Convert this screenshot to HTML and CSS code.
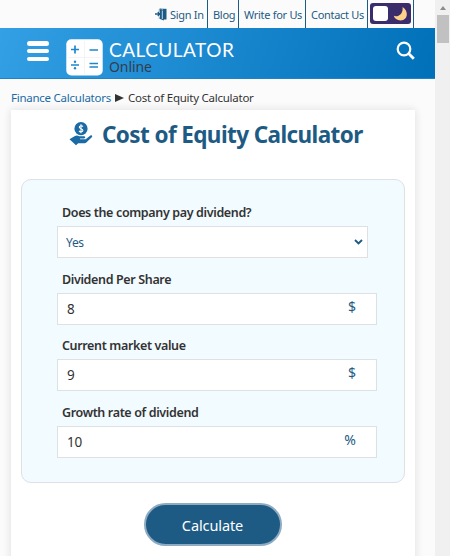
FILE: index.html
```
<!DOCTYPE html>
<html lang="en">
    <head>
        <meta charset="utf-8">
        <title>Cost of Equity Calculator</title>
        <link rel="stylesheet" href="styles.css">
    </head>
    <body>
        <div class="page">
            <nav class="top_nav">
                <a class="sign_in" href="#">
                    <svg width="12" height="13" viewBox="0 0 12 13">
                        <path d="M5 .5l3.800 1.500v10.500L5 11z" fill="#1e5b84"/>
                        <path d="M8 .8h3.500v10.700H8z" fill="#1e5b84"/>
                        <path d="M4.300 4V1h4M4.300 8.500v2.500" stroke="#5f8fb0" stroke-width=".8" fill="none"/>
                        <path d="M7.300 2.500v8.500" stroke="#c5d8e4" stroke-width="1"/>
                        <path d="M0 6h5M2.800 4L5 6 2.800 8" stroke="#1e5b84" stroke-width="1.300" fill="none"/>
                    </svg>
                    <span>Sign In</span>
                </a>
                <a class="blog" href="#">Blog</a>
                <a class="write" href="#">Write for Us</a>
                <a class="contact" href="#">Contact Us</a>
                <div class="theme">
                    <button class="toggle" type="button" aria-label="Dark mode">
                        <span class="knob"></span>
                        <svg width="15" height="16" viewBox="0 0 15 16">
                            <path d="M9.500 1C16 5 15 14.500 7.500 14.500 4 14.500 1.500 12.500.8 9.800 5.500 11.500 10.500 7.500 9.500 1z" fill="#ffd28a"/>
                        </svg>
                    </button>
                </div>
            </nav>
            <header class="header">
                <button class="menu" type="button" aria-label="Menu"><i></i><i></i><i></i></button>
                <a class="logo" href="#">
                    <svg width="37" height="37" viewBox="0 0 37 37">
                        <rect x=".3" y=".3" width="36.400" height="36.200" rx="5" fill="#fff"/>
                        <path d="M18.500 2v33M2 18.500h33" stroke="#eceff2" stroke-width=".7"/>
                        <path d="M5 10.500h8M9 6.500v8M23.500 11h8.500M5 26h8M23.500 24.500h8.500M23.500 28h8.500" stroke="#1f86cc" stroke-width="1.700"/>
                        <circle cx="9" cy="22.700" r="1.200" fill="#1f86cc"/>
                        <circle cx="9" cy="29.300" r="1.200" fill="#1f86cc"/>
                    </svg>
                    <span class="logo_text"><b>CALCULATOR</b><em>Online</em></span>
                </a>
                <svg class="search" width="20" height="20" viewBox="0 0 20 20">
                    <circle cx="8" cy="8" r="6.300" stroke="#fff" stroke-width="2.200" fill="none"/>
                    <path d="M12.600 12.600l5.200 5.200" stroke="#fff" stroke-width="2.800"/>
                </svg>
            </header>
            <div class="crumbs">
                <a href="#">Finance Calculators</a>
                <svg width="9" height="8" viewBox="0 0 9 8"><path d="M0 0l9 4-9 4z" fill="#333"/></svg>
                <span>Cost of Equity Calculator</span>
            </div>
            <main class="card">
                <h1 class="title">
                    <svg width="24" height="24" viewBox="0 0 24 24">
                        <circle cx="12" cy="6.700" r="6.600" fill="#1a6aa5"/>
                        <path d="M14 4.600c-.8-1.300-3.800-1-3.700.6.100 1.700 3.600 1.300 3.600 3.200 0 1.700-3 1.900-3.900.5M12 2.300v9" stroke="#fff" stroke-width="1.100" fill="none"/>
                        <path d="M.5 17.200l5-3c2-.9 3.300-.7 4.700.1h5c1.600.3 1.400 2-.2 2.200h-4v.7h5.700l4.700-3.700c1.500-.9 2.500.6 1.400 1.700l-5.200 5c-.8.7-1.500 1-2.600 1H9.200L7 23.300.5 17.200z" fill="#1a6aa5"/>
                    </svg>
                    <span>Cost of Equity Calculator</span>
                </h1>
                <form class="form">
                    <div class="fields">
                        <label for="pay">Does the company pay dividend?</label>
                        <div class="select">
                            <select id="pay"><option>Yes</option><option>No</option></select>
                            <svg width="9" height="6" viewBox="0 0 9 6"><path d="M1 1l3.500 3.500L8 1" stroke="#1e5b84" stroke-width="1.900" fill="none"/></svg>
                        </div>
                        <label for="dps">Dividend Per Share</label>
                        <div class="input"><input id="dps" type="text" value="8"><span>$</span></div>
                        <label for="cmv">Current market value</label>
                        <div class="input"><input id="cmv" type="text" value="9"><span>$</span></div>
                        <label for="grd">Growth rate of dividend</label>
                        <div class="input"><input id="grd" type="text" value="10"><span>%</span></div>
                    </div>
                    <button class="calculate" type="button">Calculate</button>
                </form>
            </main>
        </div>
        <div class="scrollbar"><i class="arrow"></i><i class="thumb"></i></div>
    </body>
</html>
```
FILE: styles.css
```
* {
    box-sizing: border-box;
}
body {
    margin: 0;
    height: 556px;
    display: flex;
    overflow: hidden;
    background: #fbfbfb;
    font-family: "Noto Sans", "Open Sans", sans-serif;
    color: #333;
}
a {
    color: #1e5b84;
    text-decoration: none;
}
button {
    border: 0;
    padding: 0;
    font-family: inherit;
}
svg {
    display: block;
    flex: none;
}
.page {
    width: 435px;
    height: 556px;
    overflow: hidden;
}
.top_nav {
    height: 28px;
    display: flex;
    justify-content: flex-end;
    padding-right: 21px;
    font-size: 11px;
    letter-spacing: -0.3px;
    line-height: 30px;
    white-space: nowrap;
}
.top_nav > * {
    border-right: 1px solid #1e5b84;
    padding-left: 5px;
}
.sign_in {
    width: 53px;
    display: flex;
    align-items: flex-start;
    gap: 3px;
}
.sign_in svg {
    margin-top: 8px;
}
.top_nav .sign_in {
    padding-left: 0;
}
.blog {
    width: 31px;
}
.write {
    width: 67px;
}
.contact {
    width: 62px;
}
.top_nav .theme {
    width: 46px;
    padding: 3px 0 0 2px;
}
.toggle {
    width: 41px;
    height: 21px;
    display: flex;
    align-items: center;
    justify-content: space-between;
    padding: 0 3px;
    border-radius: 3px;
    background: #3b2d6b;
}
.knob {
    width: 15px;
    height: 15px;
    border-radius: 3px;
    background: #fff;
}
.header {
    height: 51px;
    display: flex;
    padding-left: 27px;
    background: linear-gradient(110deg, #339fe4, #0070b9);
    border-bottom: 1px solid #2183c4;
}
.menu {
    width: 22px;
    height: 20px;
    margin-top: 13px;
    display: flex;
    flex-direction: column;
    justify-content: space-between;
    background: none;
}
.menu i {
    height: 4.5px;
    border-radius: 3px;
    background: #fff;
}
.logo {
    display: flex;
    gap: 6px;
    margin: 11px 0 0 17px;
}
.logo_text {
    display: flex;
    flex-direction: column;
}
.logo_text b {
    font: 400 19px/22px Lato, sans-serif;
    letter-spacing: 0.5px;
    color: #fff;
}
.logo_text em {
    font-style: normal;
    font-size: 14px;
    letter-spacing: -0.1px;
    line-height: 12px;
    color: #333d4d;
}
.search {
    margin: 13px 19px 0 auto;
}
.crumbs {
    height: 31px;
    display: flex;
    align-items: center;
    padding: 6px 0 0 11px;
    gap: 4px;
    font-size: 11.5px;
    letter-spacing: -0.25px;
    line-height: 16px;
    white-space: nowrap;
}
.crumbs a {
    color: #1a6aa5;
}
.card {
    width: 404px;
    height: 470px;
    margin-left: 11px;
    padding: 0 10px;
    background: #fff;
    box-shadow: 0 0 8px #ddd;
}
.title {
    height: 69px;
    margin: 0;
    padding: 12px 0 0 48px;
    display: flex;
    gap: 9px;
    font-size: 22.5px;
    letter-spacing: -0.6px;
    line-height: 25px;
    color: #1e5b84;
    white-space: nowrap;
}
.form {
    display: flex;
    flex-direction: column;
    align-items: center;
}
.fields {
    width: 384px;
    height: 304px;
    padding: 24px 27px 0 36px;
    border: 1px solid #dde1e2;
    border-radius: 10px;
    background: #f2fbff;
}
.fields label {
    display: block;
    height: 22px;
    padding-left: 4px;
    font-size: 12.5px;
    letter-spacing: -0.36px;
    line-height: 18px;
    font-weight: 600;
}
.select,
.input {
    width: 320px;
    height: 32px;
    margin: 0 0 12.5px -1px;
    display: flex;
    align-items: center;
    border: 1px solid #dde1e2;
    background: #fff;
}
.select {
    width: 311px;
    padding-right: 4px;
}
.select select,
.input input {
    flex: 1;
    min-width: 0;
    border: 0;
    outline: 0;
    padding: 0 0 0 9px;
    appearance: none;
    background: none;
    font-family: inherit;
    font-size: 13.5px;
    letter-spacing: -0.3px;
    color: #333;
}
.select select {
    padding-left: 8px;
    font-size: 12px;
    color: #1e5b84;
}
.input span {
    margin: -5px 20px 0 0;
    font-size: 14px;
    color: #1e5b84;
}
.calculate {
    width: 138px;
    height: 43px;
    margin: 20px 1px 0 0;
    border: 2px solid #8fabc2;
    border-radius: 22px;
    background: #1e5b84;
    color: #fff;
    font-size: 14.5px;
    letter-spacing: -0.1px;
}
.scrollbar {
    width: 15px;
    display: flex;
    flex-direction: column;
    align-items: center;
    background: #f0f0f0;
}
.arrow {
    margin-top: 6px;
    border: 3.5px solid transparent;
    border-top: 0;
    border-bottom: 4px solid #8b8b8b;
}
.thumb {
    width: 12px;
    height: 28px;
    margin-top: 5px;
    background: #c1c1c1;
}
```
